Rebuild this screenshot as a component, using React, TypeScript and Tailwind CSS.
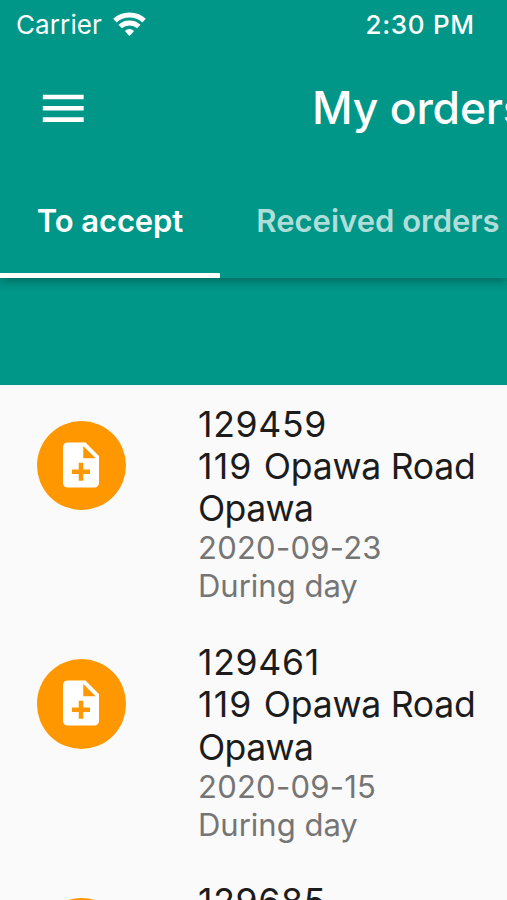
import React from "react";

type Order = {
  id: string;
  houseNumber: string;
  street: string;
  suburb: string;
  date: string;
  slot: string;
};

const orders: Order[] = [
  { id: "129459", houseNumber: "119", street: "Opawa Road", suburb: "Opawa", date: "2020-09-23", slot: "During day" },
  { id: "129461", houseNumber: "119", street: "Opawa Road", suburb: "Opawa", date: "2020-09-15", slot: "During day" },
  { id: "129685", houseNumber: "119", street: "Opawa Road", suburb: "Opawa", date: "2020-09-15", slot: "During day" },
];

const WifiIcon = () => (
  <svg className="w-[33px] h-[25px] shrink-0" viewBox="0 0 33 25" fill="none" stroke="currentColor" strokeWidth="5">
    <path d="M1.9 8.6C10 1.1 23 1.1 31.1 8.6" />
    <path d="M7.2 14.5C12.4 9.7 20.6 9.7 25.8 14.5" />
    <path d="M11.9 19C14.6 16.2 18.4 16.2 21.1 19L17.3 23.3Q16.5 24.2 15.7 23.3Z" fill="currentColor" stroke="none" />
  </svg>
);

const MenuIcon = () => (
  <svg className="w-[54.5px] h-[54.5px]" viewBox="0 0 24 24" fill="currentColor">
    <path d="M3 18h18v-2H3v2zm0-5h18v-2H3v2zm0-7v2h18V6H3z" />
  </svg>
);

const NoteAddIcon = () => (
  <svg className="w-[54px] h-[54px]" viewBox="0 0 24 24" fill="currentColor">
    <path d="M14 2H6c-1.1 0-1.99.9-1.99 2L4 20c0 1.1.89 2 1.99 2H18c1.1 0 2-.9 2-2V8l-6-6zm2 14h-3v3h-2v-3H8v-2h3v-3h2v3h3v2zm-3-7V3.5L18.5 9H13z" />
  </svg>
);

const Header = () => {
  return (
    <header className="relative z-10 h-[277.5px] bg-[#009688] text-white shadow-[0_3px_10px_rgba(0,0,0,0.32)]">
      <div className="flex h-12 items-center pl-4">
        <span className="w-[96.5px] text-[26px] tracking-[0.1px]">Carrier</span>
        <WifiIcon />
        <span className="ml-[220px] text-[26px] font-[550] tracking-[0.7px]">2:30 PM</span>
      </div>
      <div className="flex h-30 items-center pl-9">
        <button>
          <MenuIcon />
        </button>
        <h1 className="ml-[221.5px] text-[44.5px] font-[550] tracking-[-0.2px]">My orders</h1>
      </div>
      <nav className="flex h-[109.5px] text-[31px] font-[560]">
        <button className="w-55 shrink-0 border-b-[5px] border-white pt-[2px] tracking-[-0.1px]">To accept</button>
        <button className="w-[316px] shrink-0 border-b-[5px] border-transparent pt-[2px] text-white/70">
          Received orders
        </button>
      </nav>
    </header>
  );
};

const OrderRow = ({ order }: { order: Order }) => {
  return (
    <li className="flex h-[238.7px] pt-[18px] pl-[36.5px]">
      <div className="mt-[18px] flex h-[89.5px] w-[89.5px] shrink-0 items-center justify-center rounded-full bg-[#ff9800] pr-[1px] pb-[1px] text-white">
        <NoteAddIcon />
      </div>
      <div className="ml-[72px] text-[31px] leading-[38px] font-[380] text-[#757575]">
        <div className="pt-[1px] text-[35.6px] leading-[42.3px] text-[#1c1c1c]">
          <p className="tracking-[0.7px]">{order.id}</p>
          <p className="tracking-[-0.25px]">
            <span className="tracking-[1.2px]">{order.houseNumber} </span>
            {order.street}
          </p>
          <p className="tracking-[-0.6px]">{order.suburb}</p>
        </div>
        <p className="-mt-[1px] tracking-[0.25px]">{order.date}</p>
        <p>{order.slot}</p>
      </div>
    </li>
  );
};

const App = () => {
  return (
    <div className="h-[900px] w-full overflow-hidden whitespace-nowrap bg-[#fafafa] font-['Inter',sans-serif]">
      <Header />
      <div className="h-[107px] bg-[#009688]" />
      <ul>
        {orders.map((order) => (
          <OrderRow key={order.id} order={order} />
        ))}
      </ul>
    </div>
  );
};

export default App;
